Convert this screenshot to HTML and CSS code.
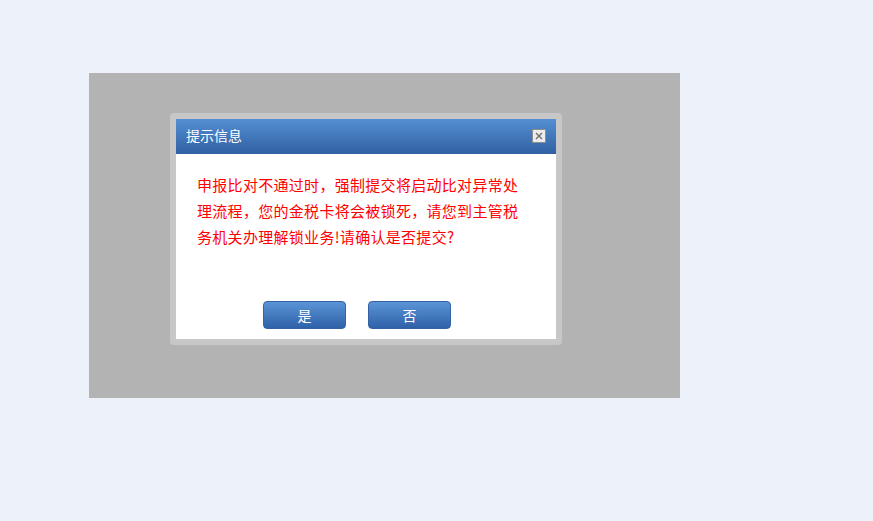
FILE: index.html
```html
<!DOCTYPE html>
<html lang="zh-CN">
<head>
	<meta charset="UTF-8" />
	<title>提示信息</title>
	<link rel="stylesheet" href="styles.css">
</head>
<body>
<div class="mask">
	<div class="dialog">
		<div class="dialog-header">
			<span class="dialog-title">提示信息</span>
			<span class="dialog-close">
				<svg width="12" height="12" viewBox="0 0 12 12">
					<path d="M3 3 L9 9 M9 3 L3 9" stroke="#6f6f6f" stroke-width="1.4" fill="none"/>
				</svg>
			</span>
		</div>
		<div class="dialog-body">
			申报比对不通过时，强制提交将启动比对异常处理流程，您的金税卡将会被锁死，请您到主管税务机关办理解锁业务!请确认是否提交?
		</div>
		<div class="dialog-footer">
			<button class="button">是</button>
			<button class="button">否</button>
		</div>
	</div>
</div>
</body>
</html>
```

FILE: styles.css
```css
body, html {
	margin: 0;
	height: 100%;
	background-color: #edf2fa;
	font-family: "Noto Sans CJK SC", "Liberation Sans", sans-serif;
}
body {
	padding-top: 73px;
	box-sizing: border-box;
}
.mask {
	margin-left: 89px;
	width: 591px;
	height: 325px;
	box-sizing: border-box;
	padding: 40px 0 0 81px;
	background-color: #b3b3b3;
}
.dialog {
	width: 380px;
	height: 220px;
	border: 6px solid #c7c7c7;
	border-radius: 4px;
	background-color: #fff;
	display: flex;
	flex-direction: column;
}
.dialog-header {
	height: 35px;
	flex: none;
	display: flex;
	justify-content: space-between;
	align-items: center;
	padding: 0 10px;
	background: linear-gradient(to bottom, #548fd2, #3060a3);
}
.dialog-title {
	color: #fff;
	font-size: 14px;
	line-height: 16px;
	margin-top: -3px;
}
.dialog-close {
	width: 12px;
	height: 12px;
	margin-top: -1px;
	border: 1px solid #8c8c8c;
	background-color: #ececec;
	display: flex;
}
.dialog-body {
	padding: 18px 36px 0 21px;
	font-size: 15px;
	line-height: 26px;
	letter-spacing: 0.3px;
	color: #ff0000;
}
.dialog-footer {
	margin-top: auto;
	padding: 0 18px 10px 0;
	display: flex;
	justify-content: center;
	gap: 22px;
}
.button {
	width: 83px;
	height: 28px;
	padding: 0;
	border: 1px solid #3462a4;
	border-radius: 4px;
	background: linear-gradient(to bottom, #5a94d6, #2f61a8);
	color: #fff;
	font-family: inherit;
	font-size: 14px;
	cursor: pointer;
}
```
